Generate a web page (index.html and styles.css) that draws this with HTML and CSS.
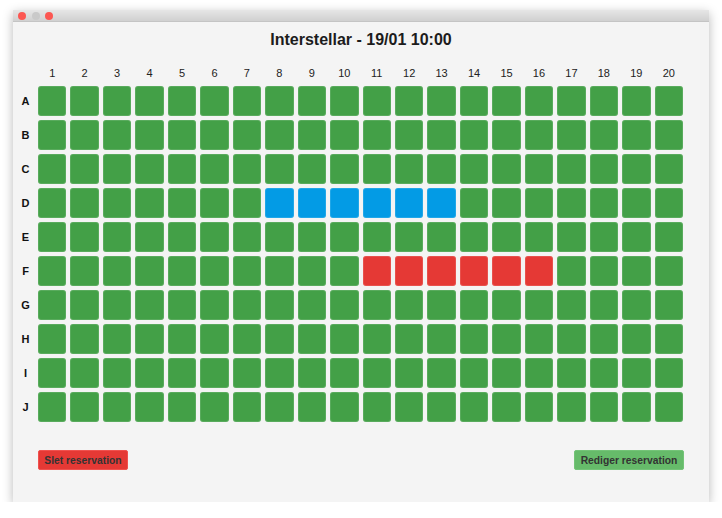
FILE: index.html
```html
<!DOCTYPE html>
<html>
<head>
<meta charset="utf-8">
<link rel="stylesheet" href="styles.css">
</head>
<body>
<div class="window">
  <div class="titlebar">
    <span class="dot red"></span><span class="dot gray"></span><span class="dot red"></span>
  </div>
  <h1 class="title">Interstellar - 19/01 10:00</h1>
  <div class="grid">
    <span class="corner"></span>
    <span class="col">1</span><span class="col">2</span><span class="col">3</span><span class="col">4</span><span class="col">5</span><span class="col">6</span><span class="col">7</span><span class="col">8</span><span class="col">9</span><span class="col">10</span><span class="col">11</span><span class="col">12</span><span class="col">13</span><span class="col">14</span><span class="col">15</span><span class="col">16</span><span class="col">17</span><span class="col">18</span><span class="col">19</span><span class="col">20</span>

    <span class="row">A</span>
    <span class="s"></span><span class="s"></span><span class="s"></span><span class="s"></span><span class="s"></span><span class="s"></span><span class="s"></span><span class="s"></span><span class="s"></span><span class="s"></span><span class="s"></span><span class="s"></span><span class="s"></span><span class="s"></span><span class="s"></span><span class="s"></span><span class="s"></span><span class="s"></span><span class="s"></span><span class="s"></span>

    <span class="row">B</span>
    <span class="s"></span><span class="s"></span><span class="s"></span><span class="s"></span><span class="s"></span><span class="s"></span><span class="s"></span><span class="s"></span><span class="s"></span><span class="s"></span><span class="s"></span><span class="s"></span><span class="s"></span><span class="s"></span><span class="s"></span><span class="s"></span><span class="s"></span><span class="s"></span><span class="s"></span><span class="s"></span>

    <span class="row">C</span>
    <span class="s"></span><span class="s"></span><span class="s"></span><span class="s"></span><span class="s"></span><span class="s"></span><span class="s"></span><span class="s"></span><span class="s"></span><span class="s"></span><span class="s"></span><span class="s"></span><span class="s"></span><span class="s"></span><span class="s"></span><span class="s"></span><span class="s"></span><span class="s"></span><span class="s"></span><span class="s"></span>

    <span class="row">D</span>
    <span class="s"></span><span class="s"></span><span class="s"></span><span class="s"></span><span class="s"></span><span class="s"></span><span class="s"></span><span class="s sel"></span><span class="s sel"></span><span class="s sel"></span><span class="s sel"></span><span class="s sel"></span><span class="s sel"></span><span class="s"></span><span class="s"></span><span class="s"></span><span class="s"></span><span class="s"></span><span class="s"></span><span class="s"></span>

    <span class="row">E</span>
    <span class="s"></span><span class="s"></span><span class="s"></span><span class="s"></span><span class="s"></span><span class="s"></span><span class="s"></span><span class="s"></span><span class="s"></span><span class="s"></span><span class="s"></span><span class="s"></span><span class="s"></span><span class="s"></span><span class="s"></span><span class="s"></span><span class="s"></span><span class="s"></span><span class="s"></span><span class="s"></span>

    <span class="row">F</span>
    <span class="s"></span><span class="s"></span><span class="s"></span><span class="s"></span><span class="s"></span><span class="s"></span><span class="s"></span><span class="s"></span><span class="s"></span><span class="s"></span><span class="s taken"></span><span class="s taken"></span><span class="s taken"></span><span class="s taken"></span><span class="s taken"></span><span class="s taken"></span><span class="s"></span><span class="s"></span><span class="s"></span><span class="s"></span>

    <span class="row">G</span>
    <span class="s"></span><span class="s"></span><span class="s"></span><span class="s"></span><span class="s"></span><span class="s"></span><span class="s"></span><span class="s"></span><span class="s"></span><span class="s"></span><span class="s"></span><span class="s"></span><span class="s"></span><span class="s"></span><span class="s"></span><span class="s"></span><span class="s"></span><span class="s"></span><span class="s"></span><span class="s"></span>

    <span class="row">H</span>
    <span class="s"></span><span class="s"></span><span class="s"></span><span class="s"></span><span class="s"></span><span class="s"></span><span class="s"></span><span class="s"></span><span class="s"></span><span class="s"></span><span class="s"></span><span class="s"></span><span class="s"></span><span class="s"></span><span class="s"></span><span class="s"></span><span class="s"></span><span class="s"></span><span class="s"></span><span class="s"></span>

    <span class="row">I</span>
    <span class="s"></span><span class="s"></span><span class="s"></span><span class="s"></span><span class="s"></span><span class="s"></span><span class="s"></span><span class="s"></span><span class="s"></span><span class="s"></span><span class="s"></span><span class="s"></span><span class="s"></span><span class="s"></span><span class="s"></span><span class="s"></span><span class="s"></span><span class="s"></span><span class="s"></span><span class="s"></span>

    <span class="row">J</span>
    <span class="s"></span><span class="s"></span><span class="s"></span><span class="s"></span><span class="s"></span><span class="s"></span><span class="s"></span><span class="s"></span><span class="s"></span><span class="s"></span><span class="s"></span><span class="s"></span><span class="s"></span><span class="s"></span><span class="s"></span><span class="s"></span><span class="s"></span><span class="s"></span><span class="s"></span><span class="s"></span>
  </div>
  <div class="actions">
    <button class="btn btn-delete">Slet reservation</button>
    <button class="btn btn-edit">Rediger reservation</button>
  </div>
</div>
</body>
</html>
```
FILE: styles.css
```css
html, body {
  margin: 0;
  padding: 0;
  background: #ffffff;
}

body {
  font-family: "Liberation Sans", Arial, sans-serif;
  color: #1a1a1a;
}

.window {
  margin: 10px 0 0 13px;
  width: 696px;
  height: 492px;
  background: #f4f4f4;
  box-shadow: 0 3px 10px rgba(0, 0, 0, 0.28);
  display: flex;
  flex-direction: column;
}

.titlebar {
  height: 12px;
  background: linear-gradient(#e6e6e6, #d0d0d0);
  border-bottom: 1px solid #c4c4c4;
  box-sizing: border-box;
  display: flex;
  align-items: center;
  gap: 5.5px;
  padding-left: 5px;
}

.dot {
  width: 8px;
  height: 8px;
  border-radius: 50%;
  display: block;
}

.dot.red { background: #fc5752; }
.dot.gray { background: #c9c9c9; }

.title {
  margin: 8px 0 0;
  height: 20px;
  line-height: 20px;
  font-size: 16px;
  font-weight: bold;
  text-align: center;
  color: #1c1c1c;
}

.grid {
  margin-top: 16px;
  width: 670px;
  display: grid;
  grid-template-columns: 21px repeat(20, 1fr);
  grid-template-rows: 16px repeat(10, 30px);
  column-gap: 4px;
  row-gap: 4px;
}

.col {
  font-size: 11px;
  line-height: 14px;
  text-align: center;
  color: #222;
}

.row {
  font-size: 11px;
  font-weight: bold;
  text-align: center;
  padding-left: 4px;
  align-self: center;
  color: #111;
}

.s {
  border-radius: 3px;
  background: #43a047;
  box-shadow: inset 0 0 0 1px rgba(255, 255, 255, 0.12);
}

.s.sel { background: #039be5; }
.s.taken { background: #e53935; }

.actions {
  margin-top: 28px;
  padding: 0 25px;
  display: flex;
  justify-content: space-between;
}

.btn {
  height: 20px;
  padding: 0;
  border-radius: 2px;
  font-family: "Liberation Sans", Arial, sans-serif;
  font-size: 10.3px;
  font-weight: bold;
  color: #333;
  cursor: pointer;
}

.btn-delete {
  width: 90px;
  background: #e53935;
  border: 1px solid #f0514e;
}

.btn-edit {
  width: 110px;
  background: #66bb6a;
  border: 1px solid #74c478;
}
```
